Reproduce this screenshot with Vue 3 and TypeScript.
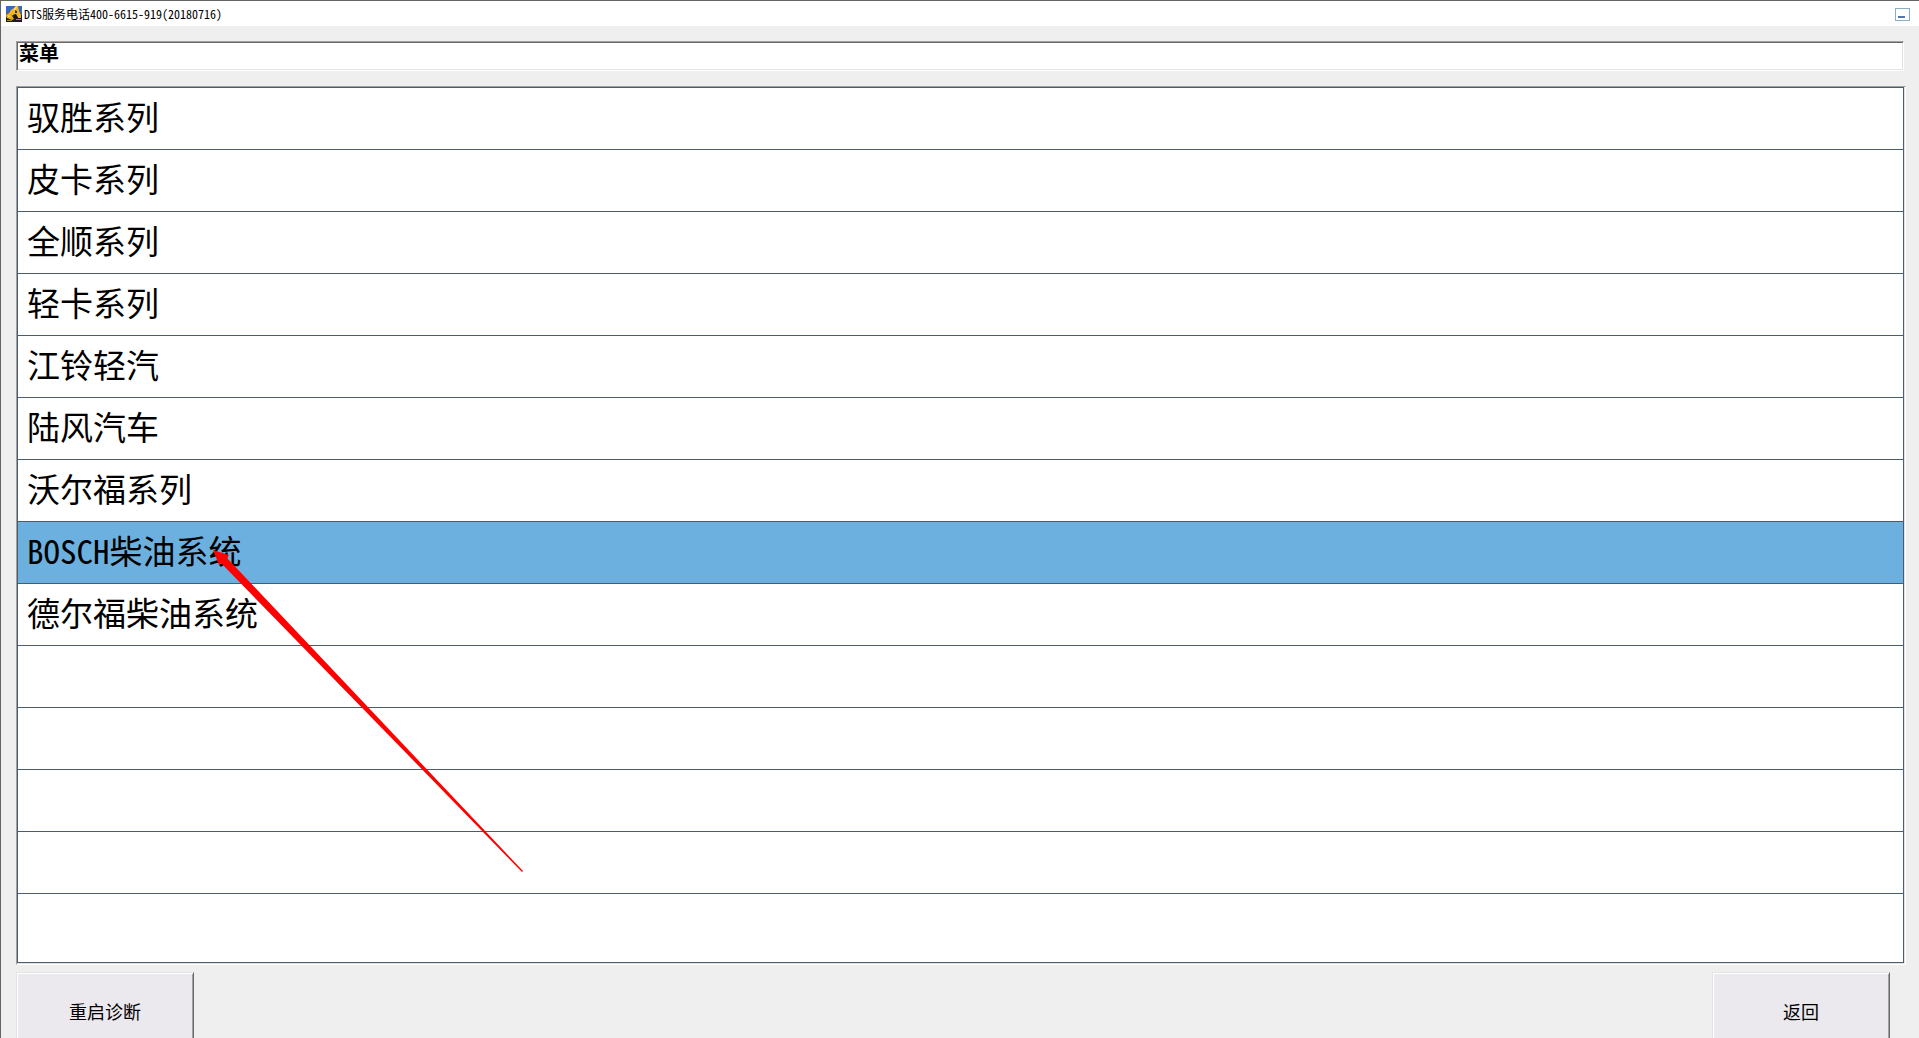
<script setup lang="ts">
import { ref } from 'vue'

const title = 'DTS服务电话400-6615-919(20180716)'
const heading = ref('菜单')
const rows: string[] = [
  '驭胜系列',
  '皮卡系列',
  '全顺系列',
  '轻卡系列',
  '江铃轻汽',
  '陆风汽车',
  '沃尔福系列',
  'BOSCH柴油系统',
  '德尔福柴油系统',
  '',
  '',
  '',
  '',
  '',
]
const selected = ref(7)
</script>

<template>
  <div class="window">
    <header class="titlebar">
      <svg class="app-icon" viewBox="0 0 16 16" aria-hidden="true">
        <rect width="16" height="16" fill="#3a68c0" />
        <path d="M0 6h3v2h10v-2h3v10H0z" fill="#46618f" />
        <path d="M0 12l4-2 5 1 7-2v7H0z" fill="#1b1b22" />
        <path d="M5 4l3-2 2-2h2l1 5 2 4v3h-3l-2-4-3 1-3 1-2-1z" fill="#f7b51a" />
        <path d="M8 3l2-3 1 1-2 4z" fill="#ffe873" />
        <path d="M0 9l3-2 3 3 2 3-2 1-5-2z" fill="#f3a915" />
        <path d="M2 9l2 1v1H2z" fill="#ffe04a" />
        <path d="M9 4l2 1v2H9z" fill="#2b3550" />
        <path d="M7 9l3-1 2 4H8z" fill="#14141c" />
        <path d="M1 14h5v1H1zM10 13h5v1h-5z" fill="#b98222" />
      </svg>
      <h1 class="title">{{ title }}</h1>
      <button class="minimize" type="button" aria-label="最小化"></button>
    </header>

    <main class="content">
      <input v-model="heading" class="heading" type="text" readonly aria-label="菜单" />

      <ul class="list">
        <li v-for="(row, i) in rows" :key="i" class="row">
          <button
            class="item"
            :class="{ selected: i === selected }"
            type="button"
            :disabled="!row"
            @click="selected = i"
          >{{ row }}</button>
        </li>
      </ul>

      <footer class="actions">
        <button class="action" type="button">重启诊断</button>
        <button class="action" type="button">返回</button>
      </footer>
    </main>

    <svg class="arrow" viewBox="0 0 312 324" aria-hidden="true">
      <path d="M0 0L16 5L14 8L310 321L309 322L8 13L6 15Z" fill="#ff0000" />
    </svg>
  </div>
</template>

<style>
body {
  margin: 0;
  background: #efefef;
}
</style>

<style scoped>
.window {
  position: relative;
  box-sizing: border-box;
  height: 100vh;
  overflow: hidden;
  border-top: 1px solid #646464;
  border-left: 1px solid #646464;
  background: #efefef;
  color: #000;
  font-family: "Noto Sans Mono CJK SC", "Noto Sans CJK SC", monospace;
}

button,
input {
  margin: 0;
  border-radius: 0;
  color: inherit;
  font-family: inherit;
}

.titlebar {
  display: flex;
  align-items: center;
  height: 25px;
  padding: 0 9px 0 5px;
  background: #fff;
}

.app-icon {
  width: 16px;
  height: 16px;
}

.title {
  flex: 1;
  margin: 0 0 0 2px;
  font-size: 12px;
  font-weight: 400;
  line-height: 16px;
}

.minimize {
  display: flex;
  align-items: flex-end;
  box-sizing: border-box;
  width: 15px;
  height: 13px;
  margin-top: 2px;
  padding: 2px;
  border: 1px solid #8aaec6;
  background: #fff;
}

.minimize::before {
  content: "";
  width: 7px;
  height: 2px;
  background: #5577a8;
}

.content {
  padding: 15px 13px 0 15px;
}

.heading {
  display: block;
  box-sizing: border-box;
  width: calc(100% - 2px);
  height: 30px;
  padding: 0 2px 8px;
  border: 1px solid;
  border-color: #a0a0a0 #fff #fff #a0a0a0;
  background: #fff;
  box-shadow: inset 1px 1px 0 #696969, inset -1px -1px 0 #e3e3e3;
  font-size: 20px;
  font-weight: 700;
  line-height: 20px;
  outline: none;
}

.list {
  margin: 15px 0 0;
  padding: 0 1px 1px 0;
  border: 1px solid;
  border-color: #a0a0a0 #fff #fff #a0a0a0;
  background: #e3e3e3;
  list-style: none;
}

.row {
  border: 1px solid #4c5c6a;
  border-top: 0;
  background: #fff;
}

.row:first-child {
  border-top: 1px solid #4c5c6a;
}

.row:last-child {
  padding-bottom: 7px;
}

.item {
  display: block;
  width: 100%;
  height: 61px;
  padding: 0 9px 6px;
  border: 0;
  background: #fff;
  font-size: 33px;
  font-weight: 300;
  line-height: 54px;
  text-align: left;
}

.item.selected {
  background: #6bb0de;
}

.actions {
  display: flex;
  justify-content: space-between;
  margin-top: 7px;
  padding-right: 16px;
}

.action {
  box-sizing: border-box;
  width: 178px;
  height: 82px;
  padding: 0 0 4px;
  border: 1px solid;
  border-color: #e3e3e3 #696969 #696969 #e3e3e3;
  background: #ebe8ee;
  box-shadow: inset 1px 1px 0 #fff, inset -1px -1px 0 #a0a0a0;
  font-size: 18px;
  font-weight: 300;
}

.arrow {
  position: absolute;
  top: 549px;
  left: 212px;
  width: 312px;
  height: 324px;
  pointer-events: none;
}
</style>
